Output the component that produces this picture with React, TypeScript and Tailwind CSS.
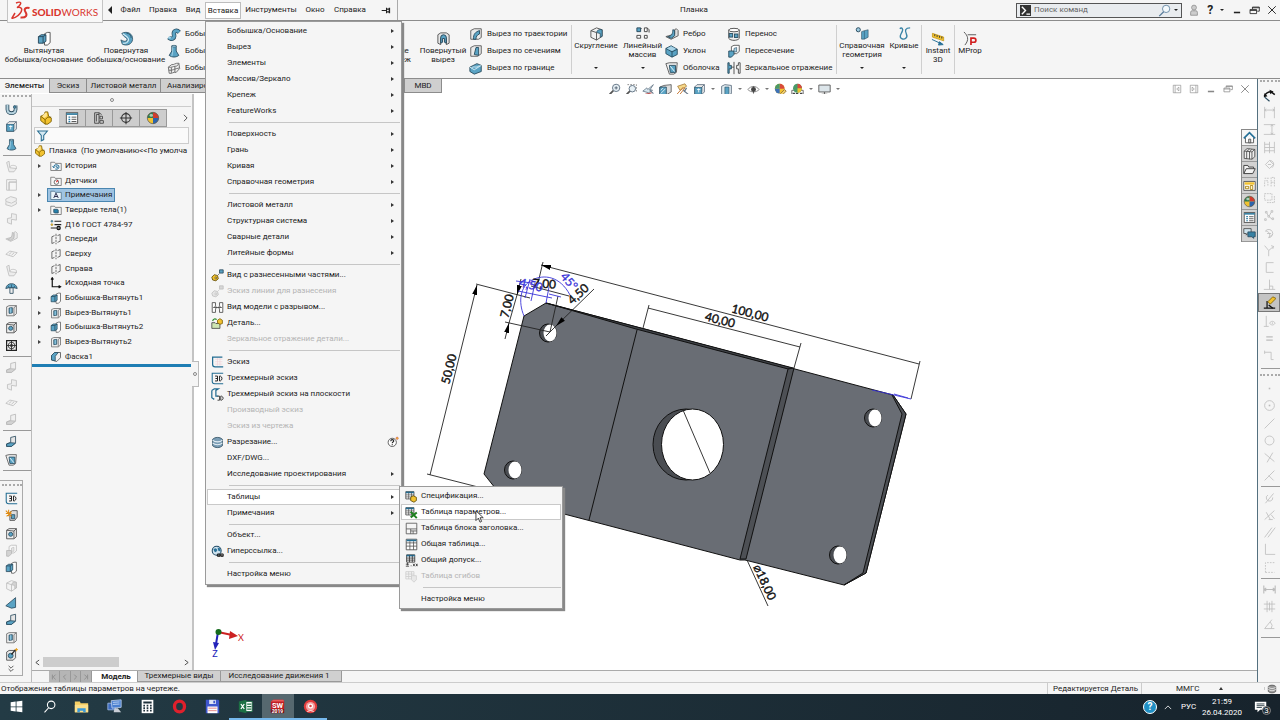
import React, { useState } from "react";

type IconProps = { name: string; className?: string };

const B = "#5aa3c4";
const D = "#27495c";
const L = "#a9d3e6";
const Y = "#f2c230";

// 16x16 drawings shared by the ribbon, the trees and the toolbars
const ICONS: Record<string, React.ReactNode> = {
  boss: (
    <g strokeLinejoin="round">
      <path d="M8 3l3-1.500h3v11L11 15H8z" fill="#fff" stroke="#555" />
      <path d="M1.500 6l3-2h5v7l-3 2h-5z" fill={B} stroke={D} />
      <path d="M1.500 6h5l3-2M6.500 6v7" fill="none" stroke={D} />
    </g>
  ),
  cut: (
    <g strokeLinejoin="round">
      <path d="M2 3.500L5 2h9v10l-3 2.500H2z" fill="#eee" stroke="#666" />
      <path d="M11 4.500V14M11 4.500L14 2" fill="none" stroke="#666" />
      <path d="M5 5l4-.5v6.500l-4 .5z" fill={B} stroke={D} />
      <path d="M7 5v6" stroke={L} />
    </g>
  ),
  revolve: (
    <g>
      <path d="M3 2.500C9-.5 15 3 14.500 9c-.5 5-6 7.500-11 5L2 9.500c3 2 6 2 6.500 0C9 7 5 7 3 2.500z" fill={B} stroke={D} strokeWidth=".8" />
      <path d="M4 3c3 2 7 3 6 7-.5 2-3 3.500-6 3" fill="none" stroke="#d7eef7" strokeWidth="1.200" />
      <path d="M8 2.500c3 0 5 2 5 5" fill="none" stroke={D} strokeWidth=".8" />
    </g>
  ),
  revcut: (
    <g>
      <path d="M2 4l3-2h6l3 2v9l-3 1.500V8a3 3 0 0 0-6 0v6.500L2 13z" fill="#e8e8e8" stroke="#555" />
      <path d="M5 13V7a3 3 0 0 1 6 0v6l-2-1V8H7v4z" fill={B} stroke={D} />
    </g>
  ),
  sweep: (
    <g>
      <path d="M2 12c3 3 7 1 6-3-1-5 3-6 6-3" fill="none" stroke={D} strokeWidth="5" />
      <path d="M2 12c3 3 7 1 6-3-1-5 3-6 6-3" fill="none" stroke={B} strokeWidth="3.500" />
      <circle cx="3" cy="12" r="1.500" fill={L} />
    </g>
  ),
  loft: (
    <g>
      <path d="M5.500 2h5v6l3 5c-3 2.500-8 2.500-11 0l3-5z" fill={B} stroke={D} />
      <path d="M6.500 3v6l-1 5" fill="none" stroke={L} />
      <ellipse cx="8" cy="2.500" rx="2.500" ry="1" fill={L} stroke={D} strokeWidth=".6" />
    </g>
  ),
  boundary: (
    <g fill="#eee" stroke="#666">
      <path d="M1.500 7l4-3c2 1 4-2 8-1.500l1 6-4 4.500c-3-1-5 2-8 1z" />
      <path d="M1.500 7c4 1 5-1 8-1s3-2 4-3M5 7.500v6M9 6v7M2 10.500c4 1 7-2 12-2.500" fill="none" />
    </g>
  ),
  sweepcut: (
    <g>
      <path d="M2 4l4-2h8v10l-3 2H2z" fill="#eaeaea" stroke="#555" />
      <path d="M5 14c0-6 2-8 7-10v4c-3 1-4 3-4 6z" fill={B} stroke={D} />
    </g>
  ),
  loftcut: (
    <g>
      <path d="M2 4l4-2h8v9l-4 3H2z" fill="#eaeaea" stroke="#555" />
      <path d="M8 4h3v9L6 12l1-4z" fill={B} stroke={D} />
    </g>
  ),
  boundcut: (
    <g>
      <path d="M1 7l8-4 5 2v7l-8 3-5-3z" fill={B} stroke={D} />
      <path d="M1 7l5 3 8-5M3 8c3-3 5 1 9-3" fill="none" stroke="#dff1f8" />
    </g>
  ),
  fillet: (
    <g>
      <path d="M2 5l6-3 6 2v7l-6 4-6-3z" fill="#f1f1f1" stroke="#555" />
      <path d="M8 7c0-2 3-4 6-3v7l-2 1V8z" fill={B} stroke={D} strokeWidth=".8" />
      <path d="M2 5l6 2v8" fill="none" stroke="#555" />
    </g>
  ),
  pattern: (
    <g>
      <path d="M2 2h4v4H2z" fill={B} stroke={D} />
      <path d="M10 2h3v4h-3zM2 10h4v3H2zM10 10h3v3h-3z" fill="#fff" stroke="#444" />
      <path d="M13 2l2 2v3M6 2l1 1" fill="none" stroke="#444" />
    </g>
  ),
  rib: (
    <g>
      <path d="M1 11l6 3 8-4V4l-2-2-2 1v5l-7 2z" fill="#ddd" stroke="#555" />
      <path d="M3 11c4 0 6-3 6-8l2 1v6l-4 3z" fill={B} stroke={D} />
    </g>
  ),
  draft: (
    <g>
      <path d="M1 5l6-3 7 4v6l-6 3-7-4z" fill={B} stroke={D} />
      <path d="M1 5l7 4 6-3M8 9v6" fill="none" stroke={D} />
      <path d="M2 5l5-2.500 5.500 3L8 8z" fill={L} />
    </g>
  ),
  shell: (
    <g>
      <path d="M1 3l4-1h9l-1 11-3 2H5z" fill="#eee" stroke="#555" />
      <path d="M5 5h7v8H6z" fill={B} stroke={D} />
      <path d="M6 6l5 6" stroke="#fff" />
    </g>
  ),
  wrap: (
    <g>
      <path d="M2 3v10c2 3 10 3 12 0V3" fill="#f0f0f0" stroke="#444" />
      <ellipse cx="8" cy="3.500" rx="6" ry="2" fill="#fff" stroke="#444" />
      <rect x="2.500" y="7.500" width="4" height="4" fill={B} stroke={D} />
      <rect x="8.500" y="8" width="4" height="4" fill={B} stroke={D} />
    </g>
  ),
  intersect: (
    <g>
      <path d="M5 3l3-1.500h6v7L11 11H5z" fill="#fff" stroke="#555" />
      <path d="M2 8h6v4l-3 3H2z" fill={B} stroke={D} />
      <path d="M8 5l3-1v5H8z" fill={L} stroke={D} strokeWidth=".7" />
    </g>
  ),
  mirror: (
    <g>
      <path d="M1 2v12h1.500V9H5V5H2.500V2z" fill={B} stroke={D} />
      <path d="M15 2v12h-2V9h-2V5h2V2zM8 1v14" fill="none" stroke="#444" />
      <path d="M5 7h3" stroke="#444" />
    </g>
  ),
  refgeo: (
    <g>
      <circle cx="3.500" cy="4" r="2.200" fill="#9ecbe0" stroke={D} />
      <path d="M7 6l3-1 4-1v8l-4 2H7z" fill={B} stroke={D} strokeWidth=".6" />
      <path d="M10 5v9" stroke={D} strokeWidth=".5" />
    </g>
  ),
  curves: (
    <path
      d="M3 3c2-2 4 0 2.500 3S2 12 5 13.500s7-1 5-5S9 2 14 2"
      fill="none"
      stroke="#3b84a6"
      strokeWidth="1.500"
    />
  ),
  instant: (
    <g>
      <path d="M1.500 2.500l12 4v4l-12-4z" fill={Y} stroke="#b98a00" strokeWidth=".7" />
      <path d="M4 3.500v2M6.500 4.500v2M9 5.200v2M11.500 6v2" stroke="#333" />
      <path d="M1 9l11 5M9 11.500l4 3-5 .5z" stroke="#246e95" fill="#246e95" />
    </g>
  ),
  mprop: (
    <g fill="none">
      <path d="M1 1c4 4 6 8 1 14M5 4h9" stroke="#555" />
      <path d="M8.500 15V7.500h3a2 2 0 0 1 0 4.500H8.500" stroke="#d21f1f" strokeWidth="1.800" />
    </g>
  ),
  part: (
    <g>
      <path d="M2 6l4-2 1-3h3l1 5 3 2v4l-4 3H7L2 11z" fill={Y} stroke="#7d5f00" />
      <path d="M2 6l5 4v5M7 10l3-3h4" fill="none" stroke="#7d5f00" />
      <path d="M7 2h2v4L6 8 3.500 6z" fill="#ffe591" />
    </g>
  ),
  list: (
    <g>
      <rect x="1.500" y="2" width="13" height="12" fill="#fff" stroke="#444" />
      <path d="M1.500 3.500h13" stroke="#3781a3" strokeWidth="2" />
      <path d="M4 7h2M4 9.500h2M4 12h2" stroke="#2a7ba3" strokeWidth="1.500" />
      <path d="M7.500 7H13M7.500 9.500H13M7.500 12H13" stroke="#444" />
    </g>
  ),
  config: (
    <g fill="none" stroke="#444">
      <path d="M3 2h5v12H3zM5 4v8M5 4h3M9 6h3v3H9zM9 11h4v3H9zM8 2l3 2" />
    </g>
  ),
  target: (
    <g fill="none" stroke="#333" strokeWidth="1.200">
      <circle cx="8" cy="8" r="5" />
      <path d="M8 1v14M1 8h14" />
    </g>
  ),
  ball: (
    <g>
      <circle cx="8" cy="8" r="6.500" fill={Y} />
      <path d="M8 8V1.500A6.500 6.500 0 0 1 14.500 8z" fill="#d23b2d" />
      <path d="M8 8H1.500A6.500 6.500 0 0 1 8 1.500z" fill="#2f7d4f" />
      <path d="M8 8h6.500A6.500 6.500 0 0 1 8 14.500z" fill="#2c64ad" />
      <circle cx="8" cy="8" r="6.500" fill="none" stroke="#555" strokeWidth=".8" />
      <ellipse cx="6" cy="5" rx="2" ry="1.500" fill="#fff" opacity=".6" />
    </g>
  ),
  funnel: <path d="M2 2.500h12L9.500 8v5l-3 1.500V8z" fill="#d5e9f2" stroke="#2b6f92" strokeWidth="1.300" />,
  history: (
    <g>
      <path d="M1 3h5l1 1.500h8V14H1z" fill="#f7f7f7" stroke="#666" />
      <path d="M5 9a3.500 3 0 1 1 2 3M3.500 8L5 10.500 7 8.500M9 7.500V10l2 .5" fill="none" stroke="#236f97" strokeWidth="1.300" />
    </g>
  ),
  sensor: (
    <g>
      <path d="M1 3h5l1 1.500h8V14H1z" fill="#f7f7f7" stroke="#666" />
      <circle cx="8.500" cy="9.500" r="3" fill="#fff" stroke="#444" />
      <path d="M8.500 9.500l2-2.500" stroke="#d22" strokeWidth="1.500" />
    </g>
  ),
  notes: (
    <g>
      <path d="M1 3h5l1 1.500h8V14H1z" fill="#eaf4fb" stroke="#4c6d85" />
      <path d="M5 12l3-6.500L11 12M6 10h4" fill="none" stroke="#224" strokeWidth="1.200" />
    </g>
  ),
  bodies: (
    <g>
      <path d="M1 3h5l1 1.500h8V14H1z" fill="#f7f7f7" stroke="#666" />
      <path d="M5 7h5l1 1v4H6l-1-1z" fill="#2880aa" stroke={D} />
    </g>
  ),
  material: (
    <g strokeWidth="1.500">
      <path d="M6 3h9M6 7.500h9M1 12h8" stroke="#222" />
      <circle cx="2.500" cy="3" r="1.300" fill={B} stroke={D} strokeWidth=".6" />
      <circle cx="2.500" cy="7.500" r="1.300" fill={Y} stroke="#7d5f00" strokeWidth=".6" />
      <circle cx="11.500" cy="12" r="2.200" fill="#888" stroke="#111" />
    </g>
  ),
  plane: (
    <g fill="none" stroke="#444">
      <path d="M6 3.500L2.500 5v9L6 12.500M10 3.500L13.500 2v9L10 12.500" />
      <path d="M8 1v14" strokeDasharray="3 1" />
    </g>
  ),
  origin: <path d="M3 1v12h11M1.500 3.500L3 1l1.500 2.500M11.500 11.500L14 13l-2.500 1.500" fill="none" stroke="#111" strokeWidth="1.600" />,
  chamfer: (
    <g>
      <path d="M2 6l4-4h8v7l-5 5-7-2z" fill="#f1f1f1" stroke="#444" />
      <path d="M2 6l4-4h5L7 7v6l-5-1z" fill={B} stroke={D} />
    </g>
  ),
  exploded: (
    <g>
      <path d="M1 10l3-3 4 1 1 4-3 2.500-4-1z" fill={Y} stroke="#5c4700" />
      <circle cx="6" cy="11" r="1.200" fill="#fff" stroke="#5c4700" />
      <path d="M9 7l2-2" stroke="#333" strokeDasharray="1.500 1" />
      <path d="M10.500 1H15v4h-4.500z" fill={B} stroke={D} />
    </g>
  ),
  broken: (
    <g fill="#fff" stroke="#444">
      <path d="M1.500 2h4v4l1 2-1 2v4h-4zM14.500 2h-4v4l-1 2 1 2v4h4z" />
      <path d="M3 8h10M3 8l1.500-1M13 8l-1.500-1" />
    </g>
  ),
  insertPart: (
    <g>
      <path d="M1 7h4l1 1h5v6H1z" fill="#cfe6b3" stroke="#444" />
      <path d="M8 4l3-2 3 2v4l-3 1-3-2z" fill={Y} stroke="#7d5f00" />
      <path d="M2 5c1-3 3-3 5-2" fill="none" stroke="#2a8a2a" strokeWidth="1.500" />
    </g>
  ),
  sketch: (
    <g fill="none">
      <path d="M5 4h9M5 7h9M5 10h9M8 2v10M11 2v10" stroke="#f0cdd5" strokeWidth=".7" />
      <path d="M14 1.500H2v9c0 2 1 3 3 3h10" stroke="#226c92" strokeWidth="1.500" />
    </g>
  ),
  sketch3d: (
    <g fill="none">
      <path d="M15 1.500H1.500v10c0 2 1 3 3 3H15" stroke="#226c92" strokeWidth="1.300" />
      <path d="M5 5h3v6H5M5.500 8H8M10.500 5v6h1q2-1 2-3t-2-3z" stroke="#222" strokeWidth="1.200" />
    </g>
  ),
  sketchPlane: (
    <g fill="none">
      <path d="M1 3v9l3 2M1 3l3-2h5l-3 2v7h3" stroke="#226c92" strokeWidth="1.500" />
      <path d="M8 10h2.500v5H8M12 10v5h1q2-1 2-2.500T13 10z" stroke="#222" />
    </g>
  ),
  slice: (
    <g>
      <path d="M2 4c3-3 9-3 12 0v8c-3 3-9 3-12 0z" fill="#7a9db5" stroke={D} />
      <path d="M2 5c3 3 9 3 12 0M2 8.500c3 3 9 3 12 0" fill="none" stroke="#e4eef4" strokeWidth="1.300" />
    </g>
  ),
  globe: (
    <g>
      <circle cx="7" cy="7" r="5.500" fill="#cfe3ef" stroke="#1e4a66" strokeWidth="1.300" />
      <path d="M3 5l3-1 2 2-2 3-2-1zM8 3l3 1 1 4-3-1z" fill="#2b7299" />
      <path d="M7 12.500h3.500M10 12.500h5M8 11h3v3H8zM12 11h3v3h-3z" fill="none" stroke="#222" strokeWidth="1.200" />
    </g>
  ),
  bom: (
    <g>
      <path d="M1 2h10v9H1z" fill="#fff" stroke="#444" />
      <path d="M1 3h10" stroke="#256f95" strokeWidth="2" />
      <path d="M1 6h10M1 8.500h10M4.500 3v8M8 3v8" stroke="#444" strokeWidth=".8" />
      <path d="M7 9l3-2 4 2v4l-3 2-4-2z" fill={Y} stroke="#5c4700" />
    </g>
  ),
  excel: (
    <g>
      <path d="M1 2h10v9H1z" fill="#fff" stroke="#444" />
      <path d="M1 3h10" stroke="#256f95" strokeWidth="2" />
      <path d="M1 6h10M1 8.500h10M4.500 3v8M8 3v8" stroke="#444" strokeWidth=".8" />
      <path d="M7 7l7.500 8M14.500 8L7 14" stroke="#1d7f1d" strokeWidth="2.400" />
    </g>
  ),
  titleBlock: (
    <g fill="#f5f5f5" stroke="#555">
      <path d="M1.500 1.500h13v13h-13z" />
      <path d="M1.500 8.500h13M7 11h7.500M7 8.500v6M10 11v3.500" />
    </g>
  ),
  table: (
    <g>
      <path d="M1.500 1.500h13v13h-13z" fill="#fff" stroke="#444" />
      <path d="M2 3h12" stroke="#256f95" strokeWidth="2" />
      <path d="M1.500 6h13M1.500 10h13M6 4v10.500M10.500 4v10.500" stroke="#555" />
    </g>
  ),
  tolerance: (
    <g>
      <path d="M2 1h10v9H2z" fill="#fff" stroke="#333" />
      <path d="M2 2h10" stroke="#256f95" strokeWidth="2" />
      <path d="M2 5h10M2 7.500h10M5.500 2v8M9 2v8" stroke="#333" />
      <path d="M1 12.500h4M3 10.500v3.500M1 15h4M7 14.500h1M10 12l2 3M12 12l-2 3M13.500 12l2 3M15.500 12l-2 3" stroke="#333" />
    </g>
  ),
  bends: (
    <g>
      <path d="M1 2h10v9H1zM1 5h10M1 8h10M4.500 2v9M8 2v9" fill="#eee" stroke="#777" />
      <path d="M8 7h6v5l-3 3-3-3z" fill="#ccc" stroke="#777" />
    </g>
  ),
  bubble: (
    <g>
      <circle cx="7" cy="8.500" r="5.500" fill="#fff" stroke="#333" />
      <path d="M5 7c0-3 4-2.500 4-.5 0 1.500-2 1.500-2 3M7 11v1.300" fill="none" stroke="#222" strokeWidth="1.500" />
      <circle cx="13.500" cy="3" r="1.600" fill={Y} stroke="#b26" strokeWidth=".5" />
    </g>
  ),
  zoomFit: (
    <g>
      <circle cx="10" cy="6" r="4.500" fill="#e8f1f6" stroke="#678" strokeWidth="1.200" />
      <path d="M6.500 9.500L2 14" stroke="#555" strokeWidth="2.200" />
      <path d="M8 6h4M10 4v4" stroke="#456" />
    </g>
  ),
  zoomArea: (
    <g>
      <path d="M3 2h11v9" fill="none" stroke="#777" strokeDasharray="2 1.500" />
      <circle cx="9" cy="7" r="4" fill="#e8f1f6" stroke="#678" strokeWidth="1.200" />
      <path d="M6 10l-4 4" stroke="#555" strokeWidth="2.200" />
    </g>
  ),
  prev: (
    <g>
      <path d="M1 10l5-4 1 2 7-6-4 6 3 1-5 3z" fill="#d7e8f0" stroke="#678" />
      <path d="M4 14l8-2" stroke="#b55" strokeWidth="1.500" />
      <path d="M9 8l5 5" stroke="#678" strokeWidth="1.300" />
    </g>
  ),
  section: (
    <g>
      <path d="M1 5l5-2 9-1v9l-5 3-9 1z" fill="#ddd" stroke="#555" />
      <path d="M1 5h8v9.500H1z" fill={B} stroke={D} />
      <path d="M2 13l6-6M2 9l3-3" stroke="#e8f4fa" />
    </g>
  ),
  dynamic: (
    <g>
      <path d="M2 4l9-3 2 3-8 5z" fill="#f6d98a" stroke="#a87d3a" />
      <path d="M1 14L9 5M4 15l7-9" stroke="#c77b3a" strokeWidth="1.200" />
      <path d="M15 14L9 9M13 6l-3 5" stroke="#678" strokeWidth="1.500" />
    </g>
  ),
  orient: (
    <g>
      <path d="M2 5h9v9H2z" fill={B} stroke={D} />
      <path d="M2 5l3-3h9l-3 3M11 14l3-3V2" fill="#e7e7e7" stroke="#567" />
      <path d="M5 8h4M7 6.500v5" stroke="#fff" />
    </g>
  ),
  display: (
    <g>
      <path d="M2 4l4-2 8 1v10l-4 2-8-1z" fill="#e1ecf1" stroke="#567" />
      <path d="M6 5h5v9.500H6z" fill={B} stroke={D} strokeWidth=".7" />
    </g>
  ),
  eye: (
    <g>
      <path d="M1 8c4-5 10-5 14 0-4 4-10 4-14 0z" fill="#fff" stroke="#777" />
      <circle cx="8" cy="8" r="3" fill="#444" />
      <path d="M8 4v9" stroke="#444" />
    </g>
  ),
  appearance: (
    <g>
      <circle cx="7" cy="7" r="6" fill={Y} />
      <path d="M7 7V1a6 6 0 0 1 6 6z" fill="#d84a3c" />
      <path d="M7 7H1a6 6 0 0 1 6-6z" fill="#4a9a68" />
      <path d="M7 7v6a6 6 0 0 1-6-6z" fill="#3d72b8" />
      <path d="M8 13l5-5 2 2-5 5z" fill="#f4d36a" stroke="#863" />
    </g>
  ),
  scene: (
    <g>
      <path d="M1 9h14v6H1z" fill="#fff" stroke="#555" />
      <path d="M2 12h3v3H2zM6 12h3v3H6zM11 12h3v3h-3z" fill="#444" />
      <circle cx="8" cy="6.500" r="5.500" fill="#4a9a68" />
      <path d="M8 6.500V1a5.500 5.500 0 0 1 5.500 5.500z" fill="#d84a3c" />
      <path d="M8 6.500h5.500A5.500 5.500 0 0 1 8 12z" fill={Y} />
    </g>
  ),
  monitor: (
    <g>
      <path d="M1 2.500h14v8.500H1z" fill="#dce5ea" stroke="#666" strokeWidth="1.200" />
      <path d="M8 11v3M4.500 14h7" stroke="#666" strokeWidth="1.500" />
    </g>
  ),
  paneL: <path d="M2 2h12v12H2zM5 2v12M11 5L7.500 8 11 11z" fill="none" stroke="#888" />,
  paneR: <path d="M2 2h12v12H2zM11 2v12M5 5l3.500 3L5 11z" fill="none" stroke="#888" />,
  min: <path d="M3 12h10" stroke="currentColor" strokeWidth="2.500" />,
  restore: <path d="M5 6V3h10v6h-3M1.500 6.500h9.500v6H1.500zM1.500 8H11M5 4h10" fill="none" stroke="currentColor" strokeWidth="1.200" />,
  close: <path d="M2 2l12 12M14 2L2 14" stroke="currentColor" strokeWidth="1.500" />,
  user: <path d="M8 8a3 3 0 1 0 0-6.500A3 3 0 0 0 8 8zM3.500 15V11q0-2 2-2h5q2 0 2 2v4z" fill="#ccc" stroke="#888" />,
  pin: <path d="M1 8h7M8 4v8M8 6h4M8 10h4M12 4v8M12.500 4v8" fill="none" stroke="#222" strokeWidth="1.500" />,
  clip: (
    <g>
      <path d="M3 2v6c0 6 10 6 10 0V3" fill="none" stroke={D} strokeWidth="4.500" />
      <path d="M3 2v6c0 6 10 6 10 0V3" fill="none" stroke="#b7d3df" strokeWidth="2.500" />
      <circle cx="12" cy="5" r="1.500" fill={B} stroke={D} />
    </g>
  ),
  sheet: (
    <g fill="none" stroke="#555">
      <path d="M2 2h12v3H5v10H2zM5 5h9v10H5z" />
    </g>
  ),
  flange: (
    <g>
      <path d="M2 3l3-1.500 1 8 8 1-3 4H5z" fill="#ddd" stroke="#555" />
      <path d="M6 9c0-3 6-3 8-1v3" fill="none" stroke="#555" />
    </g>
  ),
  hem: (
    <g fill="#e3e3e3" stroke="#555">
      <path d="M1 5l6-3 7 2v3l-6 3-7-2zM1 9v3l7 2 6-3V8" />
    </g>
  ),
  jog: <path d="M3 13l5 2V9l6 1V3L8 2v5L3 8z" fill="#e3e3e3" stroke="#555" />,
  flat: <path d="M1 9l5-4 9 2-5 5zM5 9l3-2.500M8 10l3-2.500" fill="#eee" stroke="#555" />,
  dome: (
    <g>
      <path d="M6 7h4v7H6z" fill="#eee" stroke={D} />
      <path d="M1 8c1-8 13-8 14 0l-4-1H5z" fill={B} stroke={D} />
      <path d="M8 3v4M4 5l1 2M12 5l-1 2" stroke={D} strokeWidth=".8" />
    </g>
  ),
  hole: (
    <g>
      <path d="M2 4l3-2h9v10l-3 2.500H2z" fill="#eee" stroke="#444" />
      <path d="M11 5v9M11 5L14 2M2 4l9 1" fill="none" stroke="#444" />
      <circle cx="7" cy="9" r="2.500" fill={B} stroke={D} />
    </g>
  ),
  vent: (
    <g fill="none" stroke="#222">
      <path d="M2 2h12v12H2z" strokeWidth="1.500" />
      <circle cx="8" cy="8" r="4" />
      <circle cx="8" cy="8" r="1.500" />
      <path d="M8 2v12M2 8h12" />
    </g>
  ),
  fold: (
    <g>
      <path d="M2 11l5-2V3l6-1.500v8L8 14H2z" fill="#e5e5e5" stroke={D} />
      <path d="M2 11l5-1.500L13 10l-5 4H2z" fill={B} stroke={D} />
    </g>
  ),
  explode: (
    <g>
      <path d="M6 4l3-2h6v8l-3 4H6z" fill="#ddd" stroke="#444" />
      <path d="M8 7h4v5H8z" fill={B} stroke={D} />
      <path d="M1 2l7 7M8 3L2 9M1 5.500h7M4.500 1v8" stroke="#e08a10" strokeWidth="1.300" />
    </g>
  ),
  wedge: <path d="M1 12L13 2v12l-5 1z" fill={B} stroke={D} />,
  wizard: (
    <g>
      <path d="M2 5l3-2h8v9l-3 3H2z" fill="#e7e7e7" stroke="#444" />
      <circle cx="7" cy="9.500" r="3" fill={B} stroke={D} />
      <path d="M8 8l5-6" stroke="#222" strokeWidth="1.500" />
      <path d="M14 0v4M12 2h4" stroke="#e8a020" strokeWidth="1.200" />
    </g>
  ),
  smart: (
    <g>
      <path d="M1.500 9C3 6 6 3.500 10 3.500M10 3.500L14.500 7" fill="none" stroke="#111" strokeWidth="1.800" />
      <path d="M1 10l1-5 3.500 4zM8 1l5 2-4 3.500z" fill="#111" />
      <path d="M2 10l6 5" stroke={D} strokeWidth="1.500" />
    </g>
  ),
  dimH: <path d="M2 1v14M14 1v14M2 5h12M4 3.500L2 5l2 1.500M12 3.500L14 5l-2 1.500" />,
  dimV: <path d="M1 2h14M1 14h14M11 2v12M9.500 4L11 2l1.500 2M9.500 12l1.500 2 1.500-2" />,
  dimB: <path d="M2 1v14M8 1v14M14 1v14M2 4h6M2 8h12M2 12h12" />,
  rot: <path d="M3 8l5-5 5 5-5 5zM8 3c5 0 7 5 3 9M6 8h4" />,
  chain: <path d="M2 14V7h4v7M10 14V3h4v11M2 4h5M10 9h4" strokeDasharray="2 1" />,
  chain2: <path d="M2 2h9v8H2zM5 13h9V5" strokeDasharray="2 1" />,
  nodes: <path d="M3 3h2v2H3zM10 2h2v2h-2zM6 8h2v2H6zM11 11h2v2h-2zM2 12h2v2H2zM5 5l1 3M8 8l2-4M8 10l3 2" />,
  swirl: <path d="M3 5a5 5 0 1 1 4 8l5-4M3 5c4 0 7 4 4 8M5 8h5" />,
  fork: <path d="M2 2l5 6 6-5M7 8v7M10 2l3 1-1 3" />,
  bracket: <path d="M13 2H4v12h9" />,
  perp: <path d="M8 2v12M1 14h14M8 10h4v4" />,
  brush: (
    <g>
      <path d="M1 15h14M5 15V6" stroke="#111" strokeWidth="1.500" />
      <path d="M6 7l6-6 4 2-7 7z" fill={Y} stroke="#7d5f00" />
      <path d="M7 11l5 4" stroke="#111" strokeWidth="1.600" />
    </g>
  ),
  relation: <path d="M4 1v13M1 14h6M8 10c2-3 5-3 7 0-2 3-5 3-7 0zM11.500 9v2" />,
  equal: <path d="M4 6h8M4 10h8" strokeWidth="1.500" />,
  corner: <path d="M2 4h8v9M2 2v4M10 13h3" />,
  dot: <path d="M7 8h2" strokeWidth="2" />,
  circleDot: (
    <g>
      <circle cx="8" cy="8" r="6" fill="none" />
      <path d="M7 8h2" strokeWidth="2" />
    </g>
  ),
  line: <path d="M14 2L2 14" />,
  circle: <circle cx="8" cy="8" r="5.500" fill="none" />,
  cross: <path d="M2 3l12 10M12 2L5 14" />,
  branch: <path d="M14 2L2 14M7 8l6 6" />,
  tangent: <path d="M3 15L13 3M6 5a4 4 0 1 0 6 3" />,
  coincide: <path d="M2 13L14 2M4 4l5 9M10 7l4 5M7 13h5" />,
  parallel: <path d="M2 14L11 2M6 14l9-12" />,
  ell: <path d="M3 1v13h12" />,
  ellDash: <path d="M3 14V2h11M3 14h11" strokeDasharray="2 1.500" />,
  hspan: <path d="M1 3v10M15 3v10M1 8h14M4 6L1.500 8 4 10M12 6l2.500 2L12 10" strokeWidth="1.400" />,
  grid: <path d="M5 1v14M11 1v14M1 5h14M1 11h14M8 3v10" />,
  angle: <path d="M14 13H2L11 2M9 5q4 4 1 8" />,
  home: (
    <g>
      <path d="M3 8v6.500h10V8" fill="#fff" stroke="#444" />
      <path d="M1 9l7-7 7 7" fill="none" stroke="#236f97" strokeWidth="2" />
      <path d="M7 10h2.500v4.500H7z" fill="#ddd" stroke="#444" />
    </g>
  ),
  library: <path d="M1.500 5L5 2l9.500 1v9L11 15l-9.500-1zM1.500 5l9.500 1v9M11 6l3.500-3M4.500 5.500v9M8 5.800V15M4.500 5.500L8 2.500M8 5.800l3-3" fill="#eee" stroke="#444" />,
  folder: <path d="M1 13V3h5l1 2h6v2M1 13l3-6h11l-3 6z" fill="#f4f4f4" stroke="#444" strokeWidth="1.200" />,
  palette: (
    <g>
      <path d="M1 3h14v11H1z" fill="#fff" stroke="#444" />
      <path d="M2 4h12v3H2z" fill={Y} />
      <path d="M3 9h4v3H3zM9 8h3v5H9z" fill="#fff4c9" stroke="#a07800" />
    </g>
  ),
  chat: (
    <g>
      <path d="M1 2h9v6H6l-2 2V8H1z" fill="#cfe4ee" stroke="#444" />
      <path d="M6 6h9v6h-2v2l-2-2H6z" fill="#3781a3" stroke={D} />
    </g>
  ),
};

const Icon = ({ name, className = "size-[14px]" }: IconProps) => (
  <svg viewBox="0 0 16 16" fill="none" stroke="none" className={`shrink-0 ${className}`} aria-hidden="true">
    {ICONS[name]}
  </svg>
);

interface MenuEntry {
  label?: string;
  icon?: string;
  arrow?: boolean;
  disabled?: boolean;
  active?: boolean;
  extra?: string;
  sep?: "wide" | "tight";
}

const insertMenu: MenuEntry[] = [
  { label: "Бобышка/Основание", arrow: true },
  { label: "Вырез", arrow: true },
  { label: "Элементы", arrow: true },
  { label: "Массив/Зеркало", arrow: true },
  { label: "Крепеж", arrow: true },
  { label: "FeatureWorks", arrow: true },
  { sep: "wide" },
  { label: "Поверхность", arrow: true },
  { label: "Грань", arrow: true },
  { label: "Кривая", arrow: true },
  { label: "Справочная геометрия", arrow: true },
  { sep: "wide" },
  { label: "Листовой металл", arrow: true },
  { label: "Структурная система", arrow: true },
  { label: "Сварные детали", arrow: true },
  { label: "Литейные формы", arrow: true },
  { sep: "tight" },
  { label: "Вид с разнесенными частями...", icon: "exploded" },
  { label: "Эскиз линии для разнесения", icon: "exploded", disabled: true },
  { label: "Вид модели с разрывом...", icon: "broken" },
  { label: "Деталь...", icon: "insertPart" },
  { label: "Зеркальное отражение детали...", disabled: true },
  { sep: "wide" },
  { label: "Эскиз", icon: "sketch" },
  { label: "Трехмерный эскиз", icon: "sketch3d" },
  { label: "Трехмерный эскиз на плоскости", icon: "sketchPlane" },
  { label: "Производный эскиз", disabled: true },
  { label: "Эскиз из чертежа", disabled: true },
  { label: "Разрезание...", icon: "slice", extra: "bubble" },
  { label: "DXF/DWG..." },
  { label: "Исследование проектирования", arrow: true },
  { sep: "wide" },
  { label: "Таблицы", arrow: true, active: true },
  { label: "Примечания", arrow: true },
  { sep: "tight" },
  { label: "Объект..." },
  { label: "Гиперссылка...", icon: "globe" },
  { sep: "wide" },
  { label: "Настройка меню" },
];

const tablesMenu: MenuEntry[] = [
  { label: "Спецификация...", icon: "bom" },
  { label: "Таблица параметров...", icon: "excel", active: true },
  { label: "Таблица блока заголовка...", icon: "titleBlock" },
  { label: "Общая таблица...", icon: "table" },
  { label: "Общий допуск...", icon: "tolerance" },
  { label: "Таблица сгибов", icon: "bends", disabled: true },
  { sep: "wide" },
  { label: "Настройка меню" },
];

const MenuRows = ({ items }: { items: MenuEntry[] }) => (
  <>
    {items.map((item, index) =>
      item.sep ? (
        <div key={index} className={`flex items-center pl-[22px] ${item.sep === "wide" ? "h-[7px]" : "h-[6px]"}`}>
          <div className="h-px w-full bg-[#c6c6c6]" />
        </div>
      ) : (
        <button
          key={index}
          disabled={item.disabled}
          className={`flex h-4 w-full items-center border text-left ${
            item.active ? "border-[#c9c9c9] bg-white" : "border-transparent"
          } ${item.disabled ? "text-[#b4b4b4]" : "text-[#1c1c1c]"}`}
        >
          <span className="flex w-[19px] justify-center pr-px">
            {item.icon && <Icon name={item.icon} className={`size-[13px] ${item.disabled ? "opacity-30 grayscale" : ""}`} />}
          </span>
          <span className="flex-1 whitespace-nowrap">{item.label}</span>
          {item.extra && <Icon name={item.extra} className="size-[12px]" />}
          {item.arrow && (
            <span className="mr-[5px] border-y-2 border-l-[3px] border-y-transparent border-l-[#333]" />
          )}
        </button>
      )
    )}
  </>
);

const BigButton = ({ icon, lines, width, drop }: { icon: string; lines: string[]; width: string; drop?: boolean }) => (
  <button className={`flex shrink-0 flex-col items-center ${width} ${drop ? "pt-[5px]" : "pt-[10px]"}`}>
    <Icon name={icon} className="size-[15px]" />
    <span className="flex h-5 flex-col items-center">
      {lines.map((line) => (
        <span key={line} className="h-[9px] leading-[9px] whitespace-nowrap">
          {line}
        </span>
      ))}
    </span>
    {drop && <span className="mt-[6px] border-x-2 border-t-2 border-x-transparent border-t-[#222]" />}
  </button>
);

const SmallColumn = ({ items, width }: { items: [string, string][]; width: string }) => (
  <div className={`flex shrink-0 flex-col pt-[4px] ${width}`}>
    {items.map(([icon, label], index) => (
      <button key={index} className="flex h-[17px] items-center gap-[4px] whitespace-nowrap">
        <Icon name={icon} className="size-[14px]" />
        {label}
      </button>
    ))}
  </div>
);

const Divider = () => <div className="my-1 w-px shrink-0 bg-[#cfcfcf]" />;

const Ribbon = () => (
  <div className="flex h-[58px] overflow-hidden border-b border-[#8c8c8c] bg-[#f5f5f5] pl-[3px] text-[#222]">
    <BigButton icon="boss" lines={["Вытянутая", "бобышка/основание"]} width="w-[82px]" />
    <BigButton icon="revolve" lines={["Повернутая", "бобышка/основание"]} width="w-[82px]" />
    <SmallColumn
      width="w-[192px]"
      items={[
        ["sweep", "Бобышка"],
        ["loft", "Бобышка"],
        ["boundary", "Бобышка"],
      ]}
    />
    <BigButton icon="hole" lines={["Отверстие", "под крепеж"]} width="w-[60px]" />
    <BigButton icon="revcut" lines={["Повернутый", "вырез"]} width="w-[48px]" />
    <SmallColumn
      width="w-[102px] ml-[2px]"
      items={[
        ["sweepcut", "Вырез по траектории"],
        ["loftcut", "Вырез по сечениям"],
        ["boundcut", "Вырез по границе"],
      ]}
    />
    <Divider />
    <BigButton icon="fillet" lines={["Скругление"]} width="w-[48px]" drop />
    <BigButton icon="pattern" lines={["Линейный", "массив"]} width="w-[45px]" drop />
    <SmallColumn
      width="w-[62px]"
      items={[
        ["rib", "Ребро"],
        ["draft", "Уклон"],
        ["shell", "Оболочка"],
      ]}
    />
    <SmallColumn
      width="w-[109px]"
      items={[
        ["wrap", "Перенос"],
        ["intersect", "Пересечение"],
        ["mirror", "Зеркальное отражение"],
      ]}
    />
    <Divider />
    <BigButton icon="refgeo" lines={["Справочная", "геометрия"]} width="w-[50px]" drop />
    <BigButton icon="curves" lines={["Кривые"]} width="w-[34px]" drop />
    <Divider />
    <BigButton icon="instant" lines={["Instant", "3D"]} width="w-[32px]" />
    <Divider />
    <BigButton icon="mprop" lines={["MProp"]} width="w-[30px]" />
  </div>
);

const TitleBar = ({ query, onQuery }: { query: string; onQuery: (value: string) => void }) => (
  <div className="relative z-20 flex h-[21px] items-center border-b border-[#8c8c8c] bg-[#f5f5f5] text-[#222]">
    <div className="flex h-full w-[398px] shrink-0 items-center border-r border-[#aaa] pl-[7px]">
      <div className="z-10 flex h-[23px] w-[96px] shrink-0 items-center self-start border border-t-0 border-[#c4c4c4] bg-[#f8f8f8] pl-[3px] text-[#d9362e]">
        <svg viewBox="0 0 20 20" className="size-[20px] shrink-0" fill="none" stroke="#d9362e" aria-hidden="true">
          <path d="M5 2c5-2 6 0 3 3L6 6.500c5-1 6 2 3 6S2 17.500 1 17l3-5" strokeWidth="1.500" />
          <path d="M18.500 7c-4-1-6 1-4 4s1 6-5 5.500" strokeWidth="2" />
        </svg>
        <span className="ml-px pt-[2px] font-['Lato'] text-[10px] leading-[18px]">
          <b className="font-black">SOLID</b>WORKS
        </span>
      </div>
      <span className="ml-[5px] border-y-4 border-r-4 border-y-transparent border-r-[#222]" />
      <nav className="flex flex-1 items-center">
        <button className="w-[37px]">Файл</button>
        <button className="w-[28px]">Правка</button>
        <button className="w-[28px] pl-1">Вид</button>
        <div className="relative -mb-px w-[36px] shrink-0">
          <button className="h-[17px] w-full border border-[#bdbdbd] bg-white">Вставка</button>
          <div className="absolute top-[19px] left-0 w-[197px] border border-[#9a9a9a] bg-[#f5f5f5] px-px pt-px pb-[2px] shadow-[2px_2px_1px_#888]">
            <MenuRows items={insertMenu} />
            <div className="absolute top-[464px] left-[193px] z-10 w-[164px] border border-[#9a9a9a] bg-[#f5f5f5] px-px pt-px pb-px shadow-[2px_2px_1px_#888]">
              <MenuRows items={tablesMenu} />
              <svg viewBox="0 0 12 16" className="absolute top-[23px] left-[75px] h-[13px] w-[10px]" aria-hidden="true">
                <path d="M1 1v12l3-3 2 5 2-1-2-4.500h4z" fill="#fff" stroke="#222" />
              </svg>
            </div>
          </div>
        </div>
        <button className="w-[60px]">Инструменты</button>
        <button className="w-[28px]">Окно</button>
        <button className="w-[42px]">Справка</button>
        <Icon name="pin" className="mr-[5px] ml-auto size-[11px]" />
      </nav>
    </div>
    <div className="flex-1 pl-[282px]">Планка</div>
    <label className="flex h-[15px] w-[166px] items-center border border-[#555] bg-[#e9ecef] px-[3px]">
      <svg viewBox="0 0 12 12" className="size-[11px]" aria-hidden="true">
        <path d="M0 0h12v12H0z" fill="#333" />
        <path d="M2 2l4 4-4 4M7 10h4" fill="none" stroke="#fff" strokeWidth="1.500" />
      </svg>
      <input
        value={query}
        onChange={(e) => onQuery(e.target.value)}
        placeholder="Поиск команд"
        aria-label="Поиск команд"
        className="ml-[3px] min-w-0 flex-1 bg-transparent outline-none placeholder:text-[#666]"
      />
      <svg viewBox="0 0 16 16" className="size-[13px]" fill="none" aria-hidden="true">
        <circle cx="10" cy="6" r="4.500" fill="#f3f8fb" stroke="#567b9a" />
        <path d="M7 9.500L1.500 15" stroke="#567b9a" strokeWidth="1.500" />
      </svg>
      <span className="ml-[3px] border-x-2 border-t-2 border-x-transparent border-t-[#222]" />
    </label>
    <div className="flex w-[98px] items-center justify-between pr-[3px] pl-[6px] text-[#222]">
      <button aria-label="Пользователь"><Icon name="user" className="size-[12px]" /></button>
      <button className="text-[12px] leading-[12px] font-bold">?</button>
      <span className="border-x-2 border-t-2 border-x-transparent border-t-[#222]" />
      <button aria-label="Свернуть"><Icon name="min" className="size-[10px]" /></button>
      <button aria-label="Восстановить"><Icon name="restore" className="size-[11px]" /></button>
      <button aria-label="Закрыть"><Icon name="close" className="size-[10px]" /></button>
    </div>
  </div>
);

const headsUp: [string, boolean][] = [
  ["zoomFit", false],
  ["zoomArea", false],
  ["prev", false],
  ["section", false],
  ["dynamic", false],
  ["orient", true],
  ["display", true],
  ["eye", true],
  ["appearance", false],
  ["scene", true],
  ["monitor", true],
];

const commandTabs: [string, string][] = [
  ["Элементы", "w-[49px] bg-[#f5f5f5] font-medium"],
  ["Эскиз", "w-[38px] border-r border-b border-l border-[#8c8c8c] bg-[#cfcfcf]"],
  ["Листовой металл", "w-[74px] border-r border-b border-[#8c8c8c] bg-[#cfcfcf]"],
  ["Анализирование", "flex-1 pl-[6px] text-left border-r border-b border-[#8c8c8c] bg-[#cfcfcf]"],
  ["MBD", "w-[37px] border-r border-b border-[#8c8c8c] bg-[#cfcfcf]"],
];

const TabRow = () => (
  <div className="flex h-[15px] shrink-0 bg-white">
    <div className="flex h-[14px] w-[442px] shrink-0 text-[#222]">
      {commandTabs.map(([label, look]) => (
        <button key={label} className={`whitespace-nowrap ${look}`}>
          {label}
        </button>
      ))}
    </div>
    <div className="ml-[164px] flex h-[20px] items-center">
      {headsUp.map(([icon, drop]) => (
        <button key={icon} className="flex items-center" aria-label={icon}>
          <Icon name={icon} className="mx-[2px] size-[13px]" />
          {drop && <span className="mx-[3px] border-x-2 border-t-2 border-x-transparent border-t-[#777]" />}
        </button>
      ))}
    </div>
    <div className="ml-auto flex h-[20px] items-center gap-[7px] pr-[7px] text-[#888]">
      {["paneL", "paneR", "min", "restore", "close"].map((icon) => (
        <button key={icon} aria-label={icon}>
          <Icon name={icon} className="size-[10px]" />
        </button>
      ))}
    </div>
  </div>
);

const ToolGroup = ({ icons, off, size }: { icons: string[]; off?: boolean; size: string }) => (
  <div className={`flex w-[22px] shrink-0 flex-col ${size}`}>
    {icons.map((icon, index) => {
      const gray = off || icon.startsWith("-");
      const name = icon.replace("-", "");
      return (
        <button
          key={index}
          aria-label={name}
          className={`flex flex-1 items-center justify-center ${name === "brush" ? "border border-[#777] bg-[#c4c4c4]" : ""}`}
        >
          <Icon
            name={name}
            className={`size-[13px] ${gray && name !== "brush" && name !== "smart" ? "stroke-[#555] opacity-35 grayscale" : ""}`}
          />
        </button>
      );
    })}
  </div>
);

const Dots = () => <div className="my-px h-[2px] w-full shrink-0 border-t-2 border-dotted border-[#aaa]" />;
const ToolSep = ({ gap = "my-[2px]" }: { gap?: string }) => (
  <div className={`ml-[3px] h-px shrink-0 self-stretch bg-[#999] ${gap}`} />
);

const LeftToolbar = () => (
  <div className="flex w-[32px] shrink-0 flex-col overflow-hidden border-r border-[#bbb] bg-[#f5f5f5]">
    <div className="mb-[3px] pl-[2px]"><Dots /></div>
    <ToolGroup size="h-[52px]" icons={["clip", "orient", "loft"]} />
    <ToolSep />
    <ToolGroup size="h-[139px]" icons={["-flange", "-sheet", "-hem", "-jog", "-rib", "-flat", "-flange", "dome"]} />
    <ToolSep />
    <ToolGroup size="h-[52px]" icons={["cut", "hole", "vent"]} />
    <ToolSep />
    <ToolGroup size="h-[69px]" icons={["-fold", "-jog", "-flat", "-fold"]} />
    <ToolSep />
    <ToolGroup size="h-[35px]" icons={["fold", "shell"]} />
    <ToolSep />
    <div className="mt-[7px] flex w-[23px] flex-col items-center border-t border-r border-b border-[#aaa]">
      <div className="w-full pt-[2px] pl-[2px]"><Dots /></div>
      <ToolGroup
        size="h-[173px] mt-[3px]"
        icons={["sketch3d", "explode", "hole", "-intersect", "boss", "-fillet", "wedge", "fold", "cut", "wizard"]}
      />
      <svg viewBox="0 0 10 10" className="my-[2px] size-[8px]" fill="none" stroke="#333" aria-hidden="true">
        <path d="M2 1l3 3 3-3M2 5l3 3 3-3" />
      </svg>
    </div>
  </div>
);

const RightToolbar = () => (
  <div className="flex w-[23px] shrink-0 flex-col border-l border-[#54707f] bg-[#f5f5f5]">
    <div className="mb-[4px] pl-[2px]"><Dots /></div>
    <ToolGroup
      off
      size="h-[277px]"
      icons={["smart", "dimH", "dimV", "dimB", "rot", "chain", "chain2", "nodes", "swirl", "fork", "bracket", "perp", "brush", "relation", "equal", "corner"]}
    />
    <ToolSep gap="my-[4px]" />
    <div className="mb-[3px] pl-[2px]"><Dots /></div>
    <ToolGroup off size="h-[104px]" icons={["dot", "circleDot", "line", "circle", "cross", "branch"]} />
    <ToolSep />
    <ToolGroup off size="h-[87px]" icons={["tangent", "coincide", "parallel", "ell", "ellDash"]} />
    <ToolSep />
    <ToolGroup off size="h-[52px]" icons={["hspan", "grid", "angle"]} />
    <ToolSep gap="my-[4px]" />
  </div>
);

interface TreeNode {
  icon: string;
  label: string;
  expand?: boolean;
  selected?: boolean;
}

const tree: TreeNode[] = [
  { icon: "history", label: "История", expand: true },
  { icon: "sensor", label: "Датчики" },
  { icon: "notes", label: "Примечания", expand: true, selected: true },
  { icon: "bodies", label: "Твердые тела(1)", expand: true },
  { icon: "material", label: "Д16 ГОСТ 4784-97" },
  { icon: "plane", label: "Спереди" },
  { icon: "plane", label: "Сверху" },
  { icon: "plane", label: "Справа" },
  { icon: "origin", label: "Исходная точка" },
  { icon: "boss", label: "Бобышка-Вытянуть1", expand: true },
  { icon: "cut", label: "Вырез-Вытянуть1", expand: true },
  { icon: "boss", label: "Бобышка-Вытянуть2", expand: true },
  { icon: "cut", label: "Вырез-Вытянуть2", expand: true },
  { icon: "chamfer", label: "Фаска1" },
];

const FeaturePanel = () => (
  <div className="flex w-[162px] shrink-0 flex-col border-r-2 border-[#c4c4c4] bg-[#f5f5f5] pr-px text-[#222]">
    <div className="flex h-[13px] items-center justify-center border-b border-[#ccc]">
      <span className="size-[4px] rounded-full border border-[#888]" />
    </div>
    <div className="mt-[2px] flex h-[18px]">
      {["part", "list", "config", "target", "ball"].map((icon, index) => (
        <button
          key={icon}
          aria-label={icon}
          className={`flex w-[27px] items-center justify-center ${
            index === 0 ? "" : "border border-l-0 border-[#999] bg-[#cdcdcd]"
          }`}
        >
          <Icon name={icon} className="size-[14px]" />
        </button>
      ))}
      <button aria-label="Далее" className="flex flex-1 items-center justify-center pl-3">
        <svg viewBox="0 0 6 10" className="h-[8px] w-[5px]" fill="none" stroke="#333" aria-hidden="true">
          <path d="M1 1l4 4-4 4" />
        </svg>
      </button>
    </div>
    <label className="mx-[2px] flex h-[17px] items-center border border-[#ccc] bg-[#fafafa] pl-px">
      <Icon name="funnel" className="size-[13px]" />
      <input aria-label="Фильтр" className="min-w-0 flex-1 bg-transparent outline-none" />
    </label>
    <div className="flex h-[220px] flex-col">
      <div className="flex flex-1 items-center gap-[3px] pl-[2px] whitespace-pre">
        <Icon name="part" className="size-[12px]" />
        {"Планка  (По умолчанию<<По умолча"}
      </div>
      {tree.map((node) => (
        <div key={node.label} className="flex flex-1 items-center pl-[6px]">
          <span className="w-[9px] shrink-0">
            {node.expand && (
              <span className="block w-0 border-y-2 border-l-[3px] border-y-transparent border-l-[#444]" />
            )}
          </span>
          <button
            className={`flex h-[14px] items-center gap-[3px] border px-[2px] whitespace-nowrap ${
              node.selected ? "border-[#4a86b0] bg-[#9ec3e2]" : "border-transparent"
            }`}
          >
            <Icon name={node.icon} className="size-[12px]" />
            {node.label}
          </button>
        </div>
      ))}
    </div>
    <div className="h-[3px] bg-[#1e7eb4]" />
    <div className="flex-1" />
    <div className="mb-[3px] flex h-[10px] items-center gap-[3px] pl-[3px]">
      <svg viewBox="0 0 6 8" className="h-[7px] w-[5px]" fill="none" stroke="#333" aria-hidden="true">
        <path d="M5 1L1 4l4 3" />
      </svg>
      <div className="h-full w-[76px] bg-[#cdcdcd]" />
      <svg viewBox="0 0 6 8" className="mr-[2px] ml-auto h-[7px] w-[5px]" fill="none" stroke="#333" aria-hidden="true">
        <path d="M1 1l4 3-4 3" />
      </svg>
    </div>
  </div>
);

const holes: [number, number][] = [
  [549, 333],
  [514, 470],
  [874, 418],
  [839, 555],
];

const Model = () => (
  <svg
    viewBox="194 94 1063 576"
    preserveAspectRatio="xMinYMin slice"
    className="absolute inset-0 h-full w-full"
    fontFamily="Lato, sans-serif"
    fontSize="12"
    textAnchor="middle"
  >
    <defs>
      <marker id="arrow" viewBox="0 0 10 6" refX="10" refY="3" markerWidth="10" markerHeight="6" markerUnits="userSpaceOnUse" orient="auto-start-reverse">
        <path d="M0 .5L10 3 0 5.500z" fill="#000" />
      </marker>
    </defs>
    <g stroke="#111" strokeLinejoin="round">
      <path
        d="M524 316l22-13 347 92 13 19-40 159-22 12-99-25h-5l-237-62-19-24z"
        fill="#696d74"
      />
      <path d="M546 303l247 65-1 2-156-41z" fill="#3f4247" />
      <path d="M788 369l6-1-48 191h-6z" fill="#4d5055" />
      <path d="M892 395l10 19-39 159-19 12 22-12 40-159-13-19z" fill="#4d5055" />
      <path d="M637 330l-48 190" fill="none" />
      {holes.map(([x, y]) => (
        <g key={x}>
          <ellipse cx={x - 1} cy={y} rx="8.500" ry="9" fill="#4a4d52" />
          <ellipse cx={x + 1} cy={y} rx="6.500" ry="8.500" fill="#fff" stroke="none" />
        </g>
      ))}
      <ellipse cx="686" cy="444.500" rx="33" ry="35.500" fill="#4a4d52" />
      <ellipse cx="692.500" cy="444.500" rx="31" ry="35.500" fill="#fff" />
    </g>
    <g stroke="#222" strokeWidth=".9" fill="none">
      <path d="M541 265L919 364M648 308l152 39M430 475l47-190" markerStart="url(#arrow)" markerEnd="url(#arrow)" />
      <path d="M543 262l-5 21M920 361l-9 38M649 305l-6 23M801 343l-7 25M476 284l54 14M427 474l55 14" />
      <path d="M683 410l27 63M747 560l21 46" />
      <path d="M594 289l-38 37" markerEnd="url(#arrow)" />
      <path d="M556 326l-10 10M505 322l45 10 8-36" />
      <path d="M521 279l-4 16" markerEnd="url(#arrow)" />
      <path d="M505 339l4-16" markerEnd="url(#arrow)" />
      <path d="M517 295l-8 28M531 286l38 10" />
    </g>
    <g stroke="#3a34d8" strokeWidth=".9" fill="none">
      <path d="M524 316c-6-14-4-30 8-36s28-4 38 15M516 281l16 2M518 291l34 7M530 279l-5 19M535 283l-4 18M549 287l-3 16M549 294l12 3" />
      <path d="M872 390l22 5 17 4M894 394l14 4" />
    </g>
    <g fill="#111" stroke="#111" strokeWidth=".4">
      <text transform="translate(749 317) rotate(14.600)">100,00</text>
      <text transform="translate(719 324) rotate(14.600)">40,00</text>
      <text transform="translate(453 370) rotate(-76)">50,00</text>
      <text transform="translate(511 307) rotate(-76)">7,00</text>
      <text transform="translate(544 288) rotate(4)">7,00</text>
      <text transform="translate(581 297) rotate(-42)">4,50</text>
      <text transform="translate(761 584) rotate(65)">⌀18,00</text>
    </g>
    <g fill="#3a34d8" stroke="#3a34d8" strokeWidth=".3">
      <text transform="translate(566 284) rotate(48)">45°</text>
      <text transform="translate(530 289) rotate(14)">4,50</text>
    </g>
    <g strokeWidth="2">
      <path d="M218 632l14 3" stroke="#c22" />
      <path d="M230 631l8 5-9 3z" fill="#c22" />
      <path d="M218 632l-2 12" stroke="#22b" />
      <path d="M213 642l2 8 4-7z" fill="#22b" />
      <circle cx="218.500" cy="632" r="3" fill="#156b1d" />
    </g>
    <text x="241" y="641" fontSize="9" fill="#c22">X</text>
    <text x="215" y="657" fontSize="9" fill="#22b">Z</text>
  </svg>
);

const taskPane = ["home", "library", "folder", "palette", "ball", "list", "chat"];

const Viewport = () => (
  <div className="relative min-w-0 flex-1 bg-white">
    <Model />
    <div className="absolute top-[267px] left-[-2px] flex h-[26px] w-[7px] items-center justify-center border border-l-0 border-[#bbb] bg-[#f5f5f5]">
      <span className="size-[4px] rounded-full border border-[#888]" />
    </div>
    <div className="absolute top-[35px] right-0 flex w-4 flex-col border-t border-l border-[#888]">
      {taskPane.map((icon, index) => (
        <button
          key={icon}
          aria-label={icon}
          className={`flex h-4 items-center justify-center border-b border-[#999] ${index === 0 ? "bg-[#f5f5f5]" : "bg-[#d2d2d2]"}`}
        >
          <Icon name={icon} className="size-[13px]" />
        </button>
      ))}
    </div>
  </div>
);

const BottomTabs = () => (
  <div className="flex h-[12px] shrink-0 border-t border-[#aaa] bg-[#f5f5f5] text-[#222]">
    <div className="ml-[17px] flex w-[43px] bg-[#b5b5b5]">
      {["M7 2L4 5l3 3M3 2v6", "M6 2L3 5l3 3", "M4 2l3 3-3 3", "M3 2l3 3-3 3M7 2v6"].map((d) => (
        <button key={d} aria-label="Прокрутка" className="flex flex-1 items-center justify-center border-r border-[#999]">
          <svg viewBox="0 0 10 10" className="size-[8px]" fill="none" stroke="#888" aria-hidden="true">
            <path d={d} />
          </svg>
        </button>
      ))}
    </div>
    <button className="w-[45px] bg-white pl-[3px] leading-[10px] font-bold">Модель</button>
    <button className="w-[84px] border-x border-b border-[#999] bg-[#d0d0d0] leading-[10px] whitespace-nowrap">
      Трехмерные виды
    </button>
    <button className="w-[121px] border-r border-b border-[#999] bg-[#d0d0d0] pr-[4px] leading-[10px] whitespace-nowrap">
      Исследование движения 1
    </button>
  </div>
);

const StatusBar = () => (
  <div className="flex h-[12px] shrink-0 items-center border-t border-[#ccc] bg-[#f5f5f5] text-[#222]">
    <span className="flex-1 pl-px">Отображение таблицы параметров на чертеже.</span>
    <span className="w-[94px] border-l border-[#ccc] pl-[5px] whitespace-nowrap">Редактируется Деталь</span>
    <span className="w-[78px] border-l border-[#ccc] pl-[34px]">ММГС</span>
    <span className="w-[46px] border-r border-[#ccc]">
      <span className="block w-0 border-x-2 border-b-[3px] border-x-transparent border-b-[#333]" />
    </span>
    <Icon name="slice" className="mr-[3px] ml-[2px] size-[10px] grayscale" />
  </div>
);

const taskIcons: { name: string; art: React.ReactNode; state?: string }[] = [
  { name: "Пуск", art: <path d="M2 4l6-1v6H2zM9 3l7-1v7H9zM2 10h6v5l-6-1zM9 10h7v6l-7-1z" fill="#fff" /> },
  {
    name: "Поиск",
    art: (
      <g fill="none" stroke="#fff" strokeWidth="1.300">
        <circle cx="11" cy="7" r="4.500" />
        <path d="M8 10.500L3 16" />
      </g>
    ),
  },
  {
    name: "Проводник",
    art: (
      <g>
        <path d="M1 3h6l1 2h9v11H1z" fill="#f7d064" />
        <path d="M1 7h16v9H1z" fill="#fbe08d" />
        <path d="M4 16v-5h10v5h-3v-2H7v2z" fill="#3b9ad9" />
      </g>
    ),
  },
  {
    name: "Компьютер",
    art: (
      <g>
        <path d="M1 5h9v8H1z" fill="#3d6cc0" stroke="#9fb9e2" />
        <path d="M5 2l12-1v9l-11 1z" fill="#4a7fd0" stroke="#b9cdea" />
        <path d="M7 4l8-.5M7 6.500l8-.5" stroke="#cfe0f8" />
        <path d="M9 11h4l4 5H8z" fill="#c9ced6" />
      </g>
    ),
  },
  {
    name: "Калькулятор",
    art: (
      <g>
        <path d="M2 1h14v16H2z" fill="#fff" />
        <path d="M4 3h10v2.500H4zM4 7h2v2H4zM8 7h2v2H8zM12 7h2v2h-2zM4 10h2v2H4zM8 10h2v2H8zM12 10h2v2h-2zM4 13h2v2H4zM8 13h2v2H8zM12 13h2v2h-2z" fill="#20323c" />
      </g>
    ),
  },
  { name: "Opera", art: <ellipse cx="9" cy="9" rx="6" ry="6.500" fill="none" stroke="#e0202c" strokeWidth="4" /> },
  {
    name: "Total Commander",
    art: (
      <g>
        <path d="M1 1h15l1 1v15H1z" fill="#3f56cc" />
        <path d="M5 1h8v5H5z" fill="#dfe4f5" />
        <path d="M10 2h2v3h-2z" fill="#3f56cc" />
        <path d="M3 9h12v8H3z" fill="#fff" />
        <path d="M4 11h10M4 14h10" stroke="#e07070" />
      </g>
    ),
  },
  {
    name: "Excel",
    state: "border-[#76b9ed]",
    art: (
      <g>
        <path d="M9 3h8v12H9z" fill="#fff" stroke="#1d7044" />
        <path d="M11 6h5M11 9h5M11 12h5" stroke="#1d7044" strokeWidth="1.500" />
        <path d="M1 3l9-2v16l-9-2z" fill="#1d7044" />
        <path d="M3.500 6l4 6M7.500 6l-4 6" stroke="#fff" strokeWidth="1.500" />
      </g>
    ),
  },
  {
    name: "SolidWorks 2019",
    state: "border-[#76b9ed] bg-[#56686f]",
    art: (
      <g>
        <path d="M1 3l3-2h12l1 2v10l-2 3H1z" fill="#c01f25" />
        <path d="M1 3l3-2h12l1 2z" fill="#e85a5a" />
        <path d="M1 12h16v5H1z" fill="#7a1014" />
        <text x="9" y="11" fontSize="9" fontWeight="700" textAnchor="middle" fill="#fff">SW</text>
        <text x="9" y="17" fontSize="6" fontWeight="700" textAnchor="middle" fill="#fff">2019</text>
      </g>
    ),
  },
  {
    name: "Запись",
    state: "border-[#76b9ed]",
    art: (
      <g>
        <circle cx="9" cy="9" r="8" fill="#e23c3c" />
        <circle cx="9" cy="9" r="5.500" fill="#f3a3a3" />
        <circle cx="9" cy="8.500" r="3" fill="#fff" />
        <circle cx="9" cy="8.500" r="1.500" fill="#e23c3c" />
        <path d="M5 15q4-2 8 0" stroke="#fff" fill="none" />
      </g>
    ),
  },
];

const Taskbar = () => (
  <div className="flex h-[26px] shrink-0 items-center bg-linear-to-r from-[#233b45] to-[#17232c] text-white">
    <div className="flex h-full w-[327px]">
      {taskIcons.map((item) => (
        <button
          key={item.name}
          aria-label={item.name}
          className={`flex flex-1 items-center justify-center border-b-2 ${item.state ?? "border-transparent"}`}
        >
          <svg viewBox="0 0 18 18" className="mt-px size-[15px]" aria-hidden="true">
            {item.art}
          </svg>
        </button>
      ))}
    </div>
    <div className="ml-auto flex items-center">
      <span className="flex size-[14px] items-center justify-center rounded-full border border-white bg-[#1f8fc4] text-[10px] leading-none font-bold">
        ?
      </span>
      <svg viewBox="0 0 10 6" className="ml-[7px] h-[5px] w-[8px]" fill="none" stroke="#fff" aria-hidden="true">
        <path d="M1 5l4-4 4 4" />
      </svg>
      <span className="ml-[9px] w-[22px]">РУС</span>
      <div className="flex w-[38px] flex-col items-center leading-[11px]">
        <span>21:59</span>
        <span>26.04.2020</span>
      </div>
      <button aria-label="Уведомления" className="relative mr-[12px] ml-[13px]">
        <svg viewBox="0 0 16 16" className="size-[14px]" aria-hidden="true">
          <path d="M1 2h13v9H7l-3 3v-3H1z" fill="#fff" />
          <path d="M3 4.500h9M3 6.500h9M3 8.500h6" stroke="#20323c" />
        </svg>
        <span className="absolute top-[6px] left-[8px] flex size-[9px] items-center justify-center rounded-full border border-[#888] bg-[#1c2a33] text-[8px] leading-none">
          3
        </span>
      </button>
    </div>
  </div>
);

export default function App() {
  const [query, setQuery] = useState("");

  return (
    <div className="flex h-screen flex-col overflow-hidden bg-[#f5f5f5] font-['Roboto','Noto_Sans',sans-serif] text-[8px] leading-[12px]">
      <TitleBar query={query} onQuery={setQuery} />
      <Ribbon />
      <div className="flex min-h-0 flex-1">
        <div className="flex min-w-0 flex-1 flex-col">
          <TabRow />
          <div className="flex min-h-0 flex-1">
            <LeftToolbar />
            <div className="flex min-w-0 flex-1 flex-col">
              <div className="flex min-h-0 flex-1">
                <FeaturePanel />
                <Viewport />
              </div>
              <BottomTabs />
            </div>
          </div>
        </div>
        <RightToolbar />
      </div>
      <StatusBar />
      <Taskbar />
    </div>
  );
}
